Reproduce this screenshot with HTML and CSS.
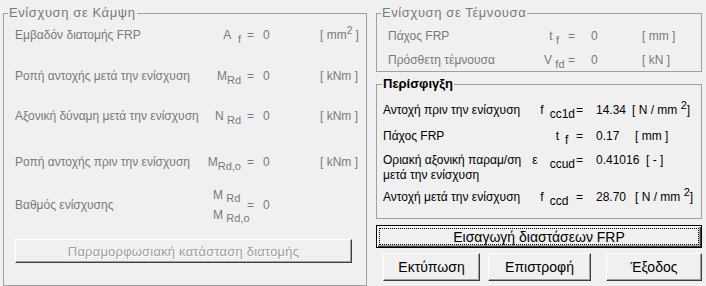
FILE: index.html
```html
<!DOCTYPE html>
<html lang="el">
<head>
    <meta charset="UTF-8">
    <title>Ενίσχυση με FRP</title>
    <link rel="stylesheet" href="styles.css">
</head>
<body>
<div class="dialog">
    <!-- Κάμψη: όλα απενεργοποιημένα -->
    <fieldset class="group group-left disabled">
        <legend>Ενίσχυση σε Κάμψη</legend>
        <div class="group-body pad-left">
            <div class="row row-1">
                <span class="lbl">Εμβαδόν διατομής FRP</span>
                <span class="sym">A&nbsp;&nbsp;<sub>f</sub></span>
                <span class="eq">=</span>
                <span class="val">0</span>
                <span class="unit">[ mm<sup>2</sup> ]</span>
            </div>
            <div class="row row-2">
                <span class="lbl">Ροπή αντοχής μετά την ενίσχυση</span>
                <span class="sym">M<sub>Rd</sub></span>
                <span class="eq">=</span>
                <span class="val">0</span>
                <span class="unit">[ kNm ]</span>
            </div>
            <div class="row row-3">
                <span class="lbl">Αξονική δύναμη μετά την ενίσχυση</span>
                <span class="sym">N <sub>Rd</sub></span>
                <span class="eq">=</span>
                <span class="val">0</span>
                <span class="unit">[ kNm ]</span>
            </div>
            <div class="row row-4">
                <span class="lbl">Ροπή αντοχής πριν την ενίσχυση</span>
                <span class="sym">M<sub>Rd,o</sub></span>
                <span class="eq">=</span>
                <span class="val">0</span>
                <span class="unit">[ kNm ]</span>
            </div>
            <div class="row row-5">
                <span class="lbl">Βαθμός ενίσχυσης</span>
                <span class="sym frac">
                    <span>M <sub>Rd</sub></span>
                    <span>M <sub>Rd,o</sub></span>
                </span>
                <span class="eq">=</span>
                <span class="val">0</span>
                <span class="unit"></span>
            </div>
            <button class="btn btn-wide" disabled>Παραμορφωσιακή κατάσταση διατομής</button>
        </div>
    </fieldset>

    <div class="side">
        <fieldset class="group disabled">
            <legend>Ενίσχυση σε Τέμνουσα</legend>
            <div class="group-body shear">
                <div class="row row-s1">
                    <span class="lbl">Πάχος FRP</span>
                    <span class="sym">t <sub>f</sub></span>
                    <span class="eq">=</span>
                    <span class="val">0</span>
                    <span class="unit">[ mm ]</span>
                </div>
                <div class="row row-s2">
                    <span class="lbl">Πρόσθετη τέμνουσα</span>
                    <span class="sym">V <sub>fd</sub></span>
                    <span class="eq">=</span>
                    <span class="val">0</span>
                    <span class="unit">[ kN ]</span>
                </div>
            </div>
        </fieldset>

        <fieldset class="group group-conf">
            <legend class="bold">Περίσφιγξη</legend>
            <div class="group-body conf">
                <div class="row row-c1">
                    <span class="lbl">Αντοχή πριν την ενίσχυση</span>
                    <span class="sym">f<sub>cc1d</sub>=</span>
                    <span class="val">14.34</span>
                    <span class="unit">[ N / mm <sup>2</sup>]</span>
                </div>
                <div class="row row-c2">
                    <span class="lbl">Πάχος FRP</span>
                    <span class="sym">t<sub>f</sub>&nbsp;&nbsp;=</span>
                    <span class="val">0.17</span>
                    <span class="unit u-mm">[ mm ]</span>
                </div>
                <div class="row row-c3">
                    <span class="lbl">Οριακή αξονική παραμ/ση<br>μετά την ενίσχυση</span>
                    <span class="sym">ε<sub class="wide">ccud</sub>=</span>
                    <span class="val">0.41016</span>
                    <span class="unit u-dash">[ - ]</span>
                </div>
                <div class="row row-c4">
                    <span class="lbl">Αντοχή μετά την ενίσχυση</span>
                    <span class="sym">f<sub>ccd</sub>&nbsp;&nbsp;=</span>
                    <span class="val">28.70</span>
                    <span class="unit u-last">[ N / mm <sup>2</sup>]</span>
                </div>
            </div>
        </fieldset>

        <button class="btn btn-default">Εισαγωγή διαστάσεων FRP</button>
        <div class="actions">
            <button class="btn btn-print">Εκτύπωση</button>
            <button class="btn btn-back">Επιστροφή</button>
            <button class="btn btn-exit">Έξοδος</button>
        </div>
    </div>
</div>
</body>
</html>
```

FILE: styles.css
```css
body {
    margin: 0;
    background-color: #f0f0f0;
    font-family: "Liberation Sans", Arial, sans-serif;
    font-size: 12px;
    color: #000;
}
.dialog {
    display: flex;
    gap: 9px;
    width: 706px;
    height: 286px;
    box-sizing: border-box;
    padding: 6px 4px 0 3px;
}
.group {
    margin: 0;
    padding: 0;
    min-width: 0;
    border: 1px solid #a0a0a0;
}
.group legend {
    margin-left: 4px;
    padding: 0 1px;
    font-size: 13px;
    line-height: 14px;
    letter-spacing: 0.6px;
}
.group legend.bold {
    margin-left: 5px;
    font-weight: bold;
    letter-spacing: 0;
}
.disabled {
    color: #7a7a7a;
}
.group-left {
    width: 364px;
    box-sizing: border-box;
}
.pad-left {
    padding: 5px 0 8px 11px;
}

/* lignes label / symbole / = / valeur / unité */
.row {
    display: grid;
    grid-template-columns: 188px 44px 16px 57px auto;
    align-items: center;
    height: 20px;
    white-space: nowrap;
}
.sym {
    text-align: right;
    padding-right: 6px;
}
sub {
    font-size: 11px;
    vertical-align: -4px;
    line-height: 0;
}
sup {
    font-size: 10px;
    vertical-align: 5px;
    line-height: 0;
}
.row-2 { margin-top: 21px; }
.row-3 { margin-top: 20px; }
.row-4 { margin-top: 26px; }
.row-5 {
    margin-top: 13px;
    height: 40px;
}
.frac {
    display: flex;
    flex-direction: column;
    text-align: left;
    padding-left: 10px;
    line-height: 20px;
}
.frac sub {
    vertical-align: -3px;
}

.side {
    width: 326px;
    display: flex;
    flex-direction: column;
}
.shear {
    padding: 6px 0 1px 11px;
}
.shear .row {
    grid-template-columns: 156px 21px 24px 53px auto;
}
.shear .eq {
    padding-left: 3px;
}
.shear .val {
    padding-left: 2px;
}
.row-s2 { margin-top: 4px; }

.group-conf {
    margin-top: 5px;
}
.conf {
    padding: 9px 0 11px 6px;
}
.conf .row {
    grid-template-columns: 124px 80px 45px auto;
}
.conf sub {
    font-size: 12px;
    margin: 0 1px 0 6px;
}
.conf sub.wide {
    margin-left: 12px;
}
.conf sup {
    font-size: 11px;
}
.conf .sym {
    padding-right: 4px;
}
.conf .val {
    padding-left: 9px;
}
.row-c2 { margin-top: 6px; }
.row-c3 {
    margin-top: 7px;
    height: 30px;
    align-items: start;
}
.row-c3 > span {
    line-height: 15px;
}
.row-c4 { margin-top: 4px; }
.u-mm { padding-left: 3px; }
.u-dash { padding-left: 14px; }
.u-last { padding-left: 3px; }

/* boutons style Windows classique */
.btn {
    font-family: "Liberation Sans", Arial, sans-serif;
    font-size: 14px;
    color: #000;
    background-color: #f0f0f0;
    border: 1px solid;
    border-color: #fff #404040 #404040 #fff;
    box-shadow: inset -1px -1px #a0a0a0;
    padding: 0;
}
.btn:disabled {
    font-size: 13px;
    color: #a0a0a0;
    text-shadow: 1px 1px #fff;
    letter-spacing: 0.2px;
}
.btn-wide {
    display: block;
    margin-top: 14px;
    width: 337px;
    height: 24px;
}
.btn-default {
    margin-top: 6px;
    height: 23px;
    border: 1px solid #000;
    box-shadow: inset 1px 1px #fff, inset -1px -1px #404040, inset -2px -2px #a0a0a0;
    outline: 1px dotted #000;
    outline-offset: -4px;
}
.actions {
    display: flex;
    gap: 8px;
    margin-top: 5px;
}
.actions .btn {
    height: 28px;
}
.btn-print {
    margin-left: 7px;
    width: 97px;
}
.btn-back {
    width: 103px;
}
.btn-exit {
    margin-left: auto;
    width: 96px;
}
```
